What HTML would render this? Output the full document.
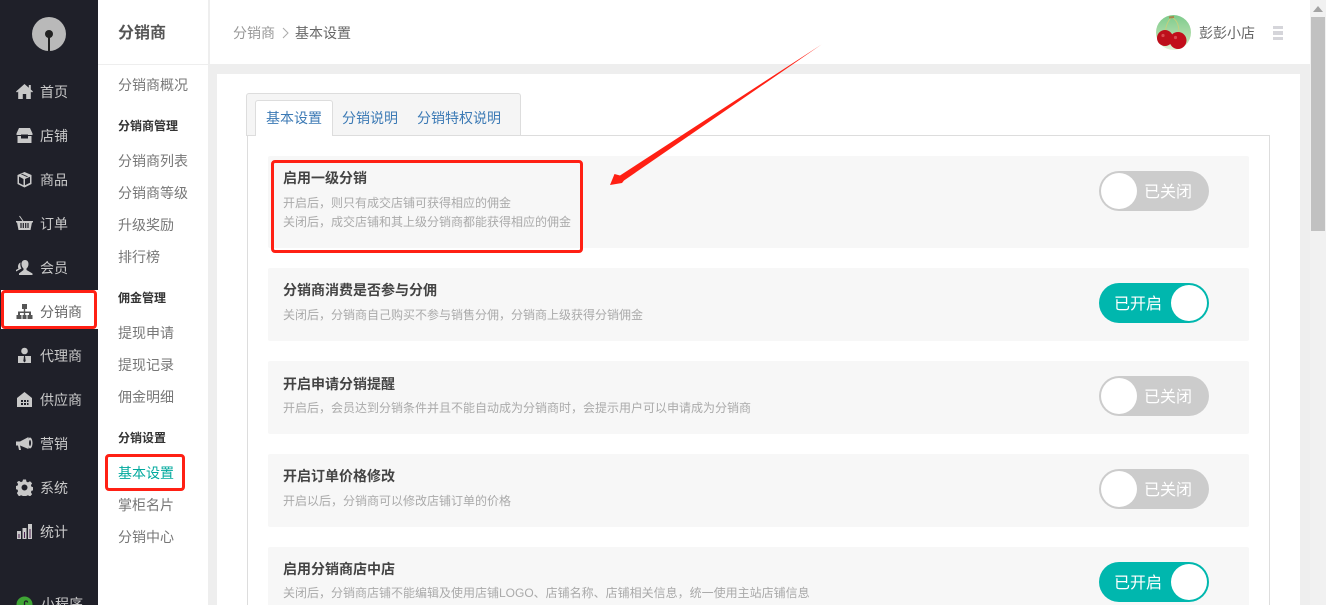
<!DOCTYPE html>
<html lang="zh-CN">
<head>
<meta charset="utf-8">
<title>基本设置</title>
<style>
*{box-sizing:border-box;margin:0;padding:0}
html,body{width:1326px;height:605px;overflow:hidden;background:#fff}
body{position:relative;font-family:"Liberation Sans","Noto Sans CJK SC",sans-serif;font-size:14px;color:#666}
.a{position:absolute;white-space:nowrap}
#side{position:absolute;left:0;top:0;width:98px;height:605px;background:#1f2029}
.n{position:absolute;left:40px;height:20px;line-height:20px;color:#c9c9c9;font-size:14px;white-space:nowrap}
.i{position:absolute;left:16px;width:17px;height:17px}
.s{position:absolute;left:118px;height:20px;line-height:20px;color:#777;font-size:14px;white-space:nowrap}
.b{font-size:12px;font-weight:bold;color:#333}
.row{position:absolute;left:268px;width:981px;background:#f7f7f7;border-radius:2px}
.t{position:absolute;left:15px;top:13px;font-size:14px;line-height:20px;font-weight:bold;color:#444;white-space:nowrap}
.d{position:absolute;left:15px;font-size:12px;line-height:19px;color:#aaa;white-space:nowrap}
.sw{position:absolute;left:831px;top:15px;width:110px;height:40px;border-radius:20px;color:#fff;font-size:16px;line-height:40px}
.sw i{position:absolute;top:2px;width:36px;height:36px;border-radius:50%;background:#fff}
.sw span{top:2px}
.off{background:#ccc}.off i{left:2px}.off span{position:absolute;left:45px}
.on{background:#00b7ae}.on i{left:72px}.on span{position:absolute;left:15px}
.red{position:absolute;border:3px solid #ff2014;border-radius:4px}
</style>
</head>
<body>
<div id="side">
  <svg class="a" style="left:31px;top:17px" width="36" height="36" viewBox="0 0 36 36"><circle cx="18" cy="17" r="17" fill="#b9b9b9"/><circle cx="18" cy="17" r="4" fill="#222"/><rect x="17" y="17" width="2" height="17" fill="#222"/></svg>

  <svg class="i" style="top:83px" viewBox="0 0 17 17"><path fill="#c9c9c9" d="M8.500 1 0 8.500l1 1 1.200-1V16h4.600v-5h3.400v5h4.600V8.500l1.200 1 1-1-2.200-2V2h-2v2.700z"/></svg>
  <svg class="i" style="top:127px" viewBox="0 0 17 17"><path fill="#c9c9c9" d="M3 1h11l2.500 5.500V8H.5V6.500zM1.500 9H5v2.500h7V9h3.500v7h-14z"/><rect x="5" y="7.500" width="7" height="1.500" fill="#1f2029"/></svg>
  <svg class="i" style="top:171px" viewBox="0 0 17 17"><path fill="#c9c9c9" d="M8.500 1 15.500 4v9l-7 3.500-7-3.500V4zM3 5.500V12l4.500 2.300V8zM9 8v6.300l5-2.500V5.800z"/><path fill="#1f2029" d="M5 3.200 11 6l1-.5-6-2.800z"/></svg>
  <svg class="i" style="top:215px" viewBox="0 0 17 17"><path fill="#c9c9c9" d="M0 6h17v1.500h-1L14.500 15h-12L1 7.500H0z"/><path stroke="#c9c9c9" stroke-width="1" d="M3.500 1 7 6"/><path stroke="#1f2029" stroke-width="1.200" d="M5 8v5M7.300 8v5M9.700 8v5M12 8v5"/></svg>
  <svg class="i" style="top:259px" viewBox="0 0 17 17"><path fill="#c9c9c9" d="M9 1c2.500 0 3.500 2 3.500 4 0 2.200-1 3.700-2 4.500V11l6 3.500V16H3v-1.500L7.500 11V9.500C6.500 8.700 5.500 7.200 5.500 5 5.500 3 6.500 1 9 1zM4.500 3.500C4 5.500 4.500 8 5.500 9.500L0 12.500V11l2.500-1.500C1.500 8 2 4.500 4.500 3.500z"/></svg>

  <div class="n" style="top:82px">首页</div>
  <div class="n" style="top:126px">店铺</div>
  <div class="n" style="top:170px">商品</div>
  <div class="n" style="top:214px">订单</div>
  <div class="n" style="top:258px">会员</div>

  <div class="a" style="left:1px;top:290px;width:97px;height:39px;background:#fff"></div>
  <svg class="i" style="top:303px" viewBox="0 0 17 17"><path fill="#555" d="M6 1h5v5H9.200v2.500H15V12h1.500v4h-5v-4H13V10H9.200v2h1.300v4h-4v-4h1.300v-2H4v2h1.500v4h-5v-4H2V8.500h5.800V6H6z"/></svg>
  <div class="n" style="top:302px;color:#666">分销商</div>

  <svg class="i" style="top:347px" viewBox="0 0 17 17"><circle cx="8.500" cy="4" r="3.300" fill="#c9c9c9"/><path fill="#c9c9c9" d="M2 9h13v7H2z"/><path fill="#1f2029" d="M8 9h1l.7 5-1.200 1.500L7.300 14z"/></svg>
  <svg class="i" style="top:391px" viewBox="0 0 17 17"><path fill="#c9c9c9" d="M8.500 1 16 7v9H1V7z"/><path fill="#1f2029" d="M5 9h2v2H5zM8 9h2v2H8zM11 9h1.500v2H11zM5 12h2v2H5zM8 12h2v2H8zM11 12h1.500v2H11z"/></svg>
  <svg class="i" style="top:435px" viewBox="0 0 17 17"><path fill="#c9c9c9" d="M0 6.500h4L12.500 2v12L4 10.500l1 4.500H3L2 10.500H0z"/><ellipse cx="14" cy="8" rx="2.500" ry="5.500" fill="#c9c9c9"/><ellipse cx="14" cy="8" rx="1" ry="3" fill="#1f2029"/></svg>
  <svg class="i" style="top:479px" viewBox="0 0 17 17"><path fill="#c9c9c9" fill-rule="evenodd" d="M7 .500h3l.5 2.200 1.500.7 2-1.200 2.100 2.100-1.200 2 .6 1.500 2 .5v3l-2 .5-.6 1.500 1.200 2-2.100 2.100-2-1.200-1.500.6-.5 2H7l-.5-2-1.500-.6-2 1.200L.900 14.100l1.200-2-.6-1.500-2-.5v-3l2-.5.600-1.500-1.200-2L3 1.900l2 1.200 1.500-.7zM8.500 5.500a3 3 0 1 0 0 6 3 3 0 0 0 0-6z"/></svg>
  <svg class="i" style="top:523px" viewBox="0 0 17 17"><path fill="#c9c9c9" d="M1 8h4v8H1zM6.500 5h4v11h-4zM12 1h4v15h-4z"/><path fill="#4a2050" d="M2.500 11h1v4h-1zM8 9h1v6H8zM13.500 6h1v9h-1z"/></svg>
  <svg class="i" style="top:596px" viewBox="0 0 17 17"><circle cx="8.500" cy="8.500" r="8" fill="#3fa535"/><path fill="none" stroke="#1f2029" stroke-width="1.300" d="M5.500 9.500c0 2 3 2 3 0v-3c0-2 3-2 3 0"/></svg>

  <div class="n" style="top:346px;">代理商</div>
  <div class="n" style="top:390px">供应商</div>
  <div class="n" style="top:434px">营销</div>
  <div class="n" style="top:478px">系统</div>
  <div class="n" style="top:522px">统计</div>
  <div class="n" style="top:594px;left:41px">小程序</div>
</div>

<div class="a" style="left:208px;top:0;width:2px;height:605px;background:#eee"></div>
<div class="a" style="left:98px;top:64px;width:110px;height:1px;background:#eee"></div>
<div class="a" style="left:118px;top:22px;font-size:16px;line-height:24px;font-weight:bold;color:#555">分销商</div>
<div class="s" style="top:75px">分销商概况</div>
<div class="s b" style="top:116px">分销商管理</div>
<div class="s" style="top:151px">分销商列表</div>
<div class="s" style="top:183px">分销商等级</div>
<div class="s" style="top:215px">升级奖励</div>
<div class="s" style="top:247px">排行榜</div>
<div class="s b" style="top:288px">佣金管理</div>
<div class="s" style="top:323px">提现申请</div>
<div class="s" style="top:355px">提现记录</div>
<div class="s" style="top:387px">佣金明细</div>
<div class="s b" style="top:428px">分销设置</div>
<div class="s" style="top:463px;color:#00a99d">基本设置</div>
<div class="s" style="top:495px">掌柜名片</div>
<div class="s" style="top:527px">分销中心</div>

<!-- main background -->
<div class="a" style="left:210px;top:64px;width:1100px;height:541px;background:#eee"></div>
<div class="a" style="left:217px;top:74px;width:1083px;height:531px;background:#fff"></div>

<!-- header -->
<div class="a" style="left:233px;top:23px;line-height:20px;color:#999">分销商</div>
<svg class="a" style="left:281px;top:27px" width="9" height="12" viewBox="0 0 9 12"><path d="M2 1l5 5-5 5" fill="none" stroke="#aaa" stroke-width="1"/></svg>
<div class="a" style="left:295px;top:23px;line-height:20px;color:#666">基本设置</div>

<svg class="a" style="left:1156px;top:15px" width="35" height="35" viewBox="0 0 35 35">
  <defs><linearGradient id="g" x1="0" y1="0" x2="0" y2="1"><stop offset="0" stop-color="#7ecb8c"/><stop offset=".7" stop-color="#b6dfae"/><stop offset="1" stop-color="#e6f3dc"/></linearGradient></defs>
  <circle cx="17.500" cy="17.500" r="17.500" fill="url(#g)"/>
  <path d="M16 2c-4 3-6 9-7 15M17 3c5 3 6 10 6 15" fill="none" stroke="#c4cf7c" stroke-width="1"/>
  <path d="M13 2.500l5-.5" stroke="#a8864a" stroke-width="2"/>
  <circle cx="9" cy="23" r="8" fill="#bd0f1b"/><circle cx="22" cy="25.500" r="8.500" fill="#c20e1b"/>
  <circle cx="7" cy="20.500" r="1.600" fill="#d94a50"/><circle cx="19.500" cy="22.500" r="1.600" fill="#d94a50"/>
</svg>
<div class="a" style="left:1199px;top:23px;line-height:20px;font-size:14px;color:#666">彭彭小店</div>
<div class="a" style="left:1273px;top:26px;width:10px;height:3px;background:#d5d5da"></div>
<div class="a" style="left:1273px;top:31px;width:10px;height:3.500px;background:#d5d5da"></div>
<div class="a" style="left:1273px;top:36.500px;width:10px;height:3.500px;background:#d5d5da"></div>

<!-- tabs -->
<div class="a" style="left:246px;top:93px;width:275px;height:43px;background:#f5f5f5;border:1px solid #ddd;border-bottom:0;border-radius:3px 3px 0 0"></div>
<div class="a" style="left:247px;top:135px;width:1023px;height:480px;background:#fff;border:1px solid #ddd"></div>
<div class="a" style="left:255px;top:100px;width:78px;height:36px;background:#fff;border:1px solid #ddd;border-bottom:0;border-radius:3px 3px 0 0"></div>
<div class="a" style="left:266px;top:108px;line-height:20px;color:#3c7ab5">基本设置</div>
<div class="a" style="left:342px;top:108px;line-height:20px;color:#3c7ab5">分销说明</div>
<div class="a" style="left:417px;top:108px;line-height:20px;color:#3c7ab5">分销特权说明</div>

<!-- rows -->
<div class="row" style="top:156px;height:92px">
  <div class="t" style="top:12px">启用一级分销</div>
  <div class="d" style="top:38px">开启后，则只有成交店铺可获得相应的佣金</div>
  <div class="d" style="top:57px">关闭后，成交店铺和其上级分销商都能获得相应的佣金</div>
  <div class="sw off"><i></i><span>已关闭</span></div>
</div>
<div class="row" style="top:268px;height:73px">
  <div class="t" style="top:12px">分销商消费是否参与分佣</div>
  <div class="d" style="top:38px">关闭后，分销商自己购买不参与销售分佣，分销商上级获得分销佣金</div>
  <div class="sw on"><span>已开启</span><i></i></div>
</div>
<div class="row" style="top:361px;height:73px">
  <div class="t">开启申请分销提醒</div>
  <div class="d" style="top:38px">开启后，会员达到分销条件并且不能自动成为分销商时，会提示用户可以申请成为分销商</div>
  <div class="sw off"><i></i><span>已关闭</span></div>
</div>
<div class="row" style="top:454px;height:73px">
  <div class="t" style="top:12px">开启订单价格修改</div>
  <div class="d" style="top:38px">开启以后，分销商可以修改店铺订单的价格</div>
  <div class="sw off"><i></i><span>已关闭</span></div>
</div>
<div class="row" style="top:547px;height:73px">
  <div class="t" style="top:12px">启用分销商店中店</div>
  <div class="d" style="top:37px">关闭后，分销商店铺不能编辑及使用店铺LOGO、店铺名称、店铺相关信息，统一使用主站店铺信息</div>
  <div class="sw on"><span>已开启</span><i></i></div>
</div>

<!-- scrollbar -->
<div class="a" style="left:1310px;top:0;width:16px;height:605px;background:#f1f1f1"></div>
<div class="a" style="left:1311px;top:17px;width:14px;height:214px;background:#c1c1c1"></div>
<svg class="a" style="left:1313px;top:6px" width="10" height="6" viewBox="0 0 10 6"><path d="M5 0l5 6H0z" fill="#a3a3a3"/></svg>

<!-- annotations -->
<div class="red" style="left:1px;top:290px;width:96px;height:39px"></div>
<div class="red" style="left:105px;top:454px;width:80px;height:37px"></div>
<div class="red" style="left:271px;top:160px;width:312px;height:93px"></div>
<svg class="a" style="left:0;top:0" width="1326" height="605" viewBox="0 0 1326 605"><path fill="#ff2014" d="M821.500 44.500 620 175.500l-5.500-1.500L610 185l12-2 2-2.500z"/></svg>
</body>
</html>
